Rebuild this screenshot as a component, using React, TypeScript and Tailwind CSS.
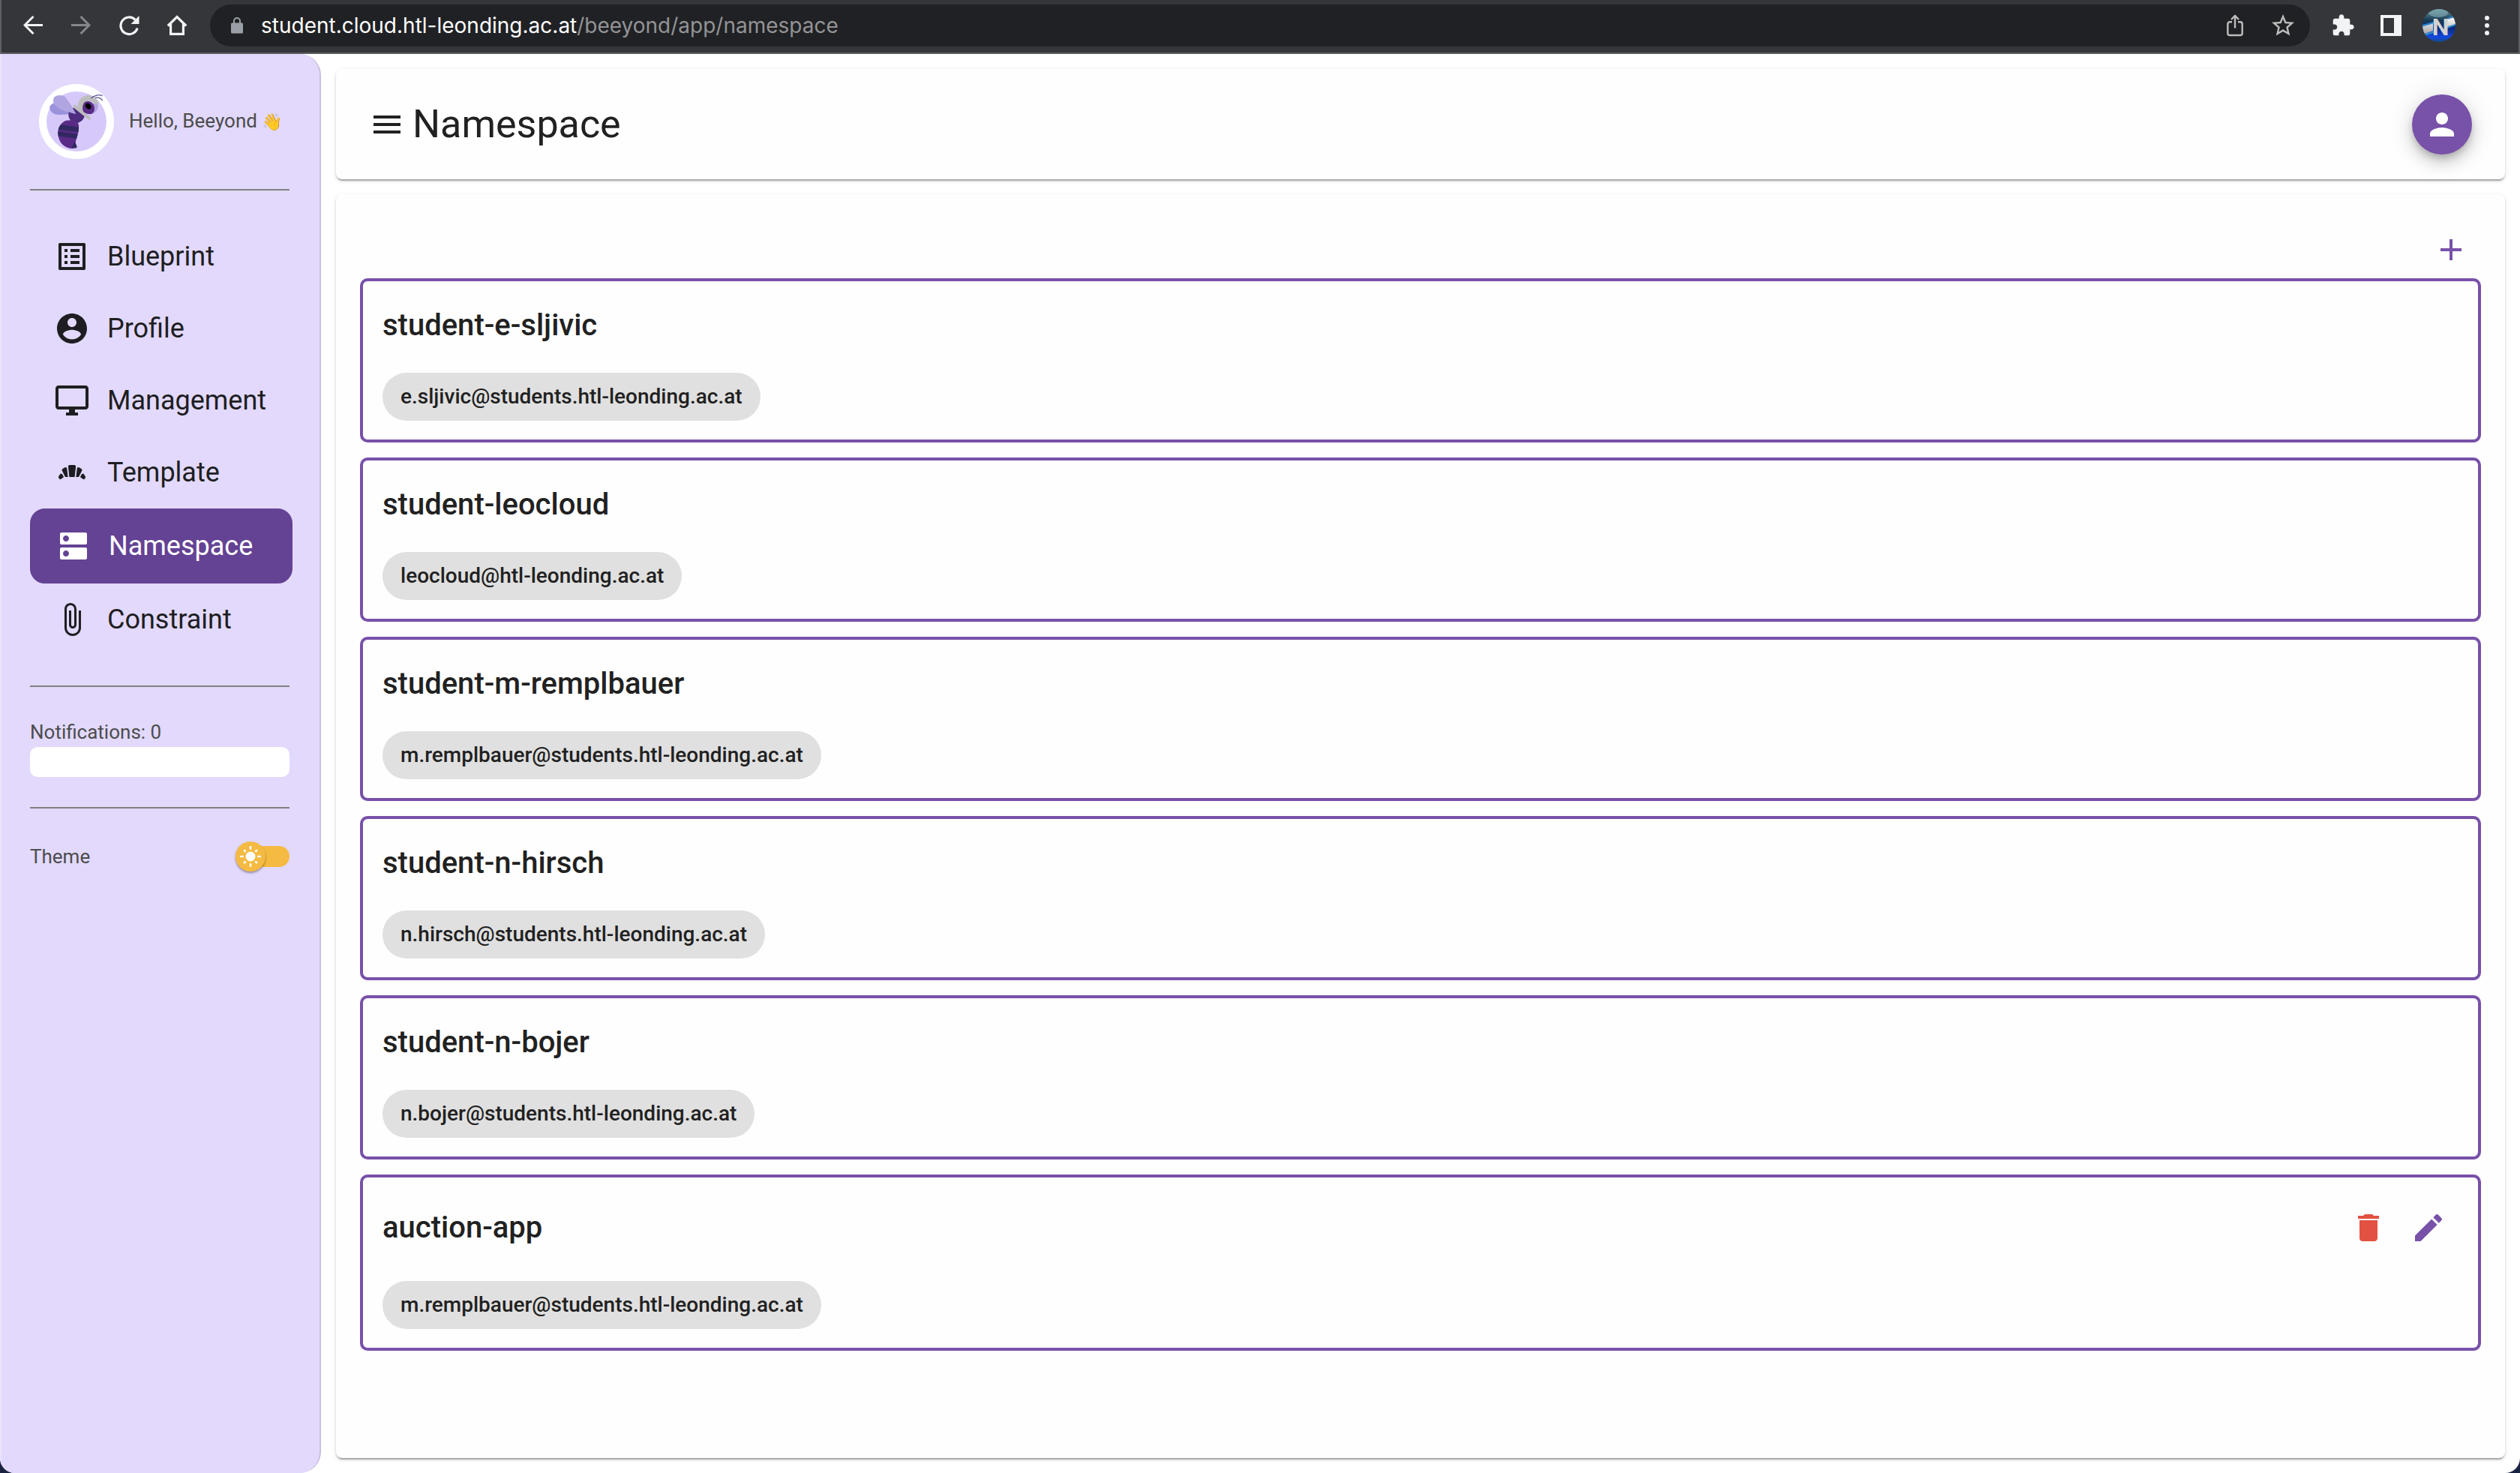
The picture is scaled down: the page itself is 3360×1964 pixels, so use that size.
import React from "react";

type IconProps = { d: string; className?: string };

function Icon({ d, className = "size-12" }: IconProps) {
  return (
    <svg viewBox="0 0 24 24" className={`shrink-0 ${className}`} fill="currentColor" aria-hidden="true">
      <path d={d} />
    </svg>
  );
}

const paths = {
  listAlt:
    "M19 5v14H5V5h14m1.1-2H3.9c-.5 0-.9.4-.9.9v16.2c0 .4.4.9.9.9h16.2c.4 0 .9-.5.9-.9V3.9c0-.5-.5-.9-.9-.9zM11 7h6v2h-6V7zm0 4h6v2h-6v-2zm0 4h6v2h-6zM7 7h2v2H7zm0 4h2v2H7zm0 4h2v2H7z",
  account:
    "M12 2C6.48 2 2 6.48 2 12s4.48 10 10 10 10-4.48 10-10S17.52 2 12 2zm0 3c1.66 0 3 1.34 3 3s-1.34 3-3 3-3-1.34-3-3 1.34-3 3-3zm0 14.2c-2.5 0-4.71-1.28-6-3.22.03-1.99 4-3.08 6-3.08 1.99 0 5.97 1.09 6 3.08-1.29 1.94-3.5 3.22-6 3.22z",
  desktop:
    "M21 2H3c-1.1 0-2 .9-2 2v12c0 1.1.9 2 2 2h7v2H8v2h8v-2h-2v-2h7c1.1 0 2-.9 2-2V4c0-1.1-.9-2-2-2zm0 14H3V4h18v12z",
  croissant:
    "M19.28 16.34C18.07 15.45 17.46 15 17.46 15s.32-.59.96-1.78c.38-.59 1.22-.59 1.6 0l.81 1.26c.19.3.21.68.06 1l-.22.47c-.25.54-.91.72-1.39.39zM4.72 16.34c-.48.33-1.13.15-1.39-.38l-.23-.47c-.15-.32-.13-.7.06-1l.81-1.26c.38-.59 1.22-.59 1.6 0 .65 1.18.97 1.77.97 1.77s-.61.45-1.82 1.34zM15.36 9.37c.09-.68.73-1.06 1.27-.75l1.59.9c.46.26.63.91.36 1.41L16.5 15h-1.8l.66-5.63zM8.63 9.37l.67 5.63H7.5l-2.08-4.07c-.26-.5-.09-1.15.36-1.41l1.59-.9c.54-.31 1.18.07 1.26.75zM13.8 15h-3.6l-.74-6.88c-.04-.59.35-1.12.88-1.12h3.34c.53 0 .92.53.88 1.12L13.8 15z",
  dns: "M20 13H4c-.55 0-1 .45-1 1v6c0 .55.45 1 1 1h16c.55 0 1-.45 1-1v-6c0-.55-.45-1-1-1zM7 19c-1.1 0-2-.9-2-2s.9-2 2-2 2 .9 2 2-.9 2-2 2zM20 3H4c-.55 0-1 .45-1 1v6c0 .55.45 1 1 1h16c.55 0 1-.45 1-1V4c0-.55-.45-1-1-1zM7 9c-1.1 0-2-.9-2-2s.9-2 2-2 2 .9 2 2-.9 2-2 2z",
  clip: "M16.5 6v11.5c0 2.21-1.79 4-4 4s-4-1.79-4-4V5c0-1.38 1.12-2.5 2.5-2.5s2.5 1.12 2.5 2.5v10.5c0 .55-.45 1-1 1s-1-.45-1-1V6H10v9.5c0 1.38 1.12 2.5 2.5 2.5s2.5-1.12 2.5-2.5V5c0-2.21-1.79-4-4-4S7 2.79 7 5v12.5c0 3.04 2.46 5.5 5.5 5.5s5.5-2.46 5.5-5.5V6h-1.5z",
  menu: "M3 18h18v-2H3v2zm0-5h18v-2H3v2zm0-7v2h18V6H3z",
  person:
    "M12 12c2.21 0 4-1.79 4-4s-1.79-4-4-4-4 1.79-4 4 1.79 4 4 4zm0 2c-2.67 0-8 1.34-8 4v2h16v-2c0-2.66-5.33-4-8-4z",
  plus: "M19 13h-6v6h-2v-6H5v-2h6V5h2v6h6v2z",
  trash: "M6 19c0 1.1.9 2 2 2h8c1.1 0 2-.9 2-2V7H6v12zM19 4h-3.5l-1-1h-5l-1 1H5v2h14V4z",
  pencil:
    "M3 17.25V21h3.75L17.81 9.94l-3.75-3.75L3 17.25zM20.71 7.04c.39-.39.39-1.02 0-1.41l-2.34-2.34c-.39-.39-1.02-.39-1.41 0l-1.83 1.83 3.75 3.75 1.83-1.83z",
  puzzle:
    "M20.5 11H19V7c0-1.1-.9-2-2-2h-4V3.5C13 2.12 11.88 1 10.5 1S8 2.12 8 3.5V5H4c-1.1 0-1.99.9-1.99 2v3.8H3.5c1.49 0 2.7 1.21 2.7 2.7s-1.21 2.7-2.7 2.7H2V20c0 1.1.9 2 2 2h3.8v-1.5c0-1.49 1.21-2.7 2.7-2.7 1.49 0 2.7 1.21 2.7 2.7V22H17c1.1 0 2-.9 2-2v-4h1.5c1.38 0 2.5-1.12 2.5-2.5S21.88 11 20.5 11z",
  star: "M22 9.24l-7.19-.62L12 2 9.19 8.63 2 9.24l5.46 4.73L5.82 21 12 17.27 18.18 21l-1.63-7.03L22 9.24zM12 15.4l-3.76 2.27 1-4.28-3.32-2.88 4.38-.38L12 6.1l1.71 4.04 4.38.38-3.32 2.88 1 4.28L12 15.4z",
};

function BarButton({ label, children }: { label: string; children: React.ReactNode }) {
  return (
    <button type="button" aria-label={label} className="flex h-14 w-16 shrink-0 items-center justify-center">
      {children}
    </button>
  );
}

function BrowserBar() {
  return (
    <div className="flex items-center border-x-2 border-b-2 border-[#5f6063] bg-[#35363a] px-[10px] pt-[6px] pb-2 text-[#f1f3f4]">
      <BarButton label="Back">
        <svg viewBox="0 0 26 26" className="size-[26px]" fill="none" stroke="currentColor" strokeWidth="3">
          <path d="M26 12.5H2M13.500 1 2 12.500 13.500 24" />
        </svg>
      </BarButton>
      <BarButton label="Forward">
        <svg viewBox="0 0 26 26" className="size-[26px] text-[#86878a]" fill="none" stroke="currentColor" strokeWidth="3">
          <path d="M0 12.500H24M12.500 1 24 12.500 12.500 24" />
        </svg>
      </BarButton>
      <BarButton label="Reload">
        <svg viewBox="0 0 28 28" className="size-7">
          <path d="M25.100 17.500A11.300 11.300 0 1 1 22.300 6.300" fill="none" stroke="currentColor" strokeWidth="3.200" />
          <path d="M27.500 1v11h-11z" fill="currentColor" />
        </svg>
      </BarButton>
      <BarButton label="Home">
        <svg viewBox="0 0 28 28" className="size-7" fill="none" stroke="currentColor" strokeWidth="3.200">
          <path d="M1.800 14.500 14 2.600l12.200 11.900M5.600 12v13.400h16.800V12" />
        </svg>
      </BarButton>
      <div className="mx-3 flex min-w-0 flex-1 items-center rounded-full bg-[#202124] pr-1 pl-7">
        <svg viewBox="0 0 16 22" className="h-[22px] w-4 shrink-0" aria-hidden="true">
          <path d="M4 9V5a4 4 0 0 1 8 0v4" fill="none" stroke="#9aa0a6" strokeWidth="2" />
          <rect y="7.500" width="16" height="14" rx="1.500" fill="#9aa0a6" />
        </svg>
        <div className="ml-6 min-w-0 flex-1 truncate font-['Inter',sans-serif] text-[28px] leading-9 text-[#939496]">
          <span className="text-white">student.cloud.htl-leonding.ac.at</span>/beeyond/app/namespace
        </div>
        <BarButton label="Share">
          <svg viewBox="0 0 24 30" className="h-[30px] w-6 text-[#bdbdbd]" fill="none" stroke="currentColor" strokeWidth="2.400">
            <path d="M8 10.200H5A2.700 2.700 0 0 0 2.300 12.900v12.400A2.700 2.700 0 0 0 5 28h14a2.700 2.700 0 0 0 2.700-2.700V12.900a2.700 2.700 0 0 0-2.700-2.700h-3M12 18.500V2.500M7 7l5-5 5 5" />
          </svg>
        </BarButton>
        <BarButton label="Bookmark">
          <Icon d={paths.star} className="size-9 text-[#bdbdbd]" />
        </BarButton>
      </div>
      <BarButton label="Extensions">
        <Icon d={paths.puzzle} className="size-8" />
      </BarButton>
      <BarButton label="Side panel">
        <svg viewBox="0 0 28 28" className="size-7" fill="currentColor">
          <path fillRule="evenodd" d="M0 0h28v28H0zM4 4v20h14V4z" />
        </svg>
      </BarButton>
      <BarButton label="Account">
        <svg viewBox="0 0 44 44" className="size-11">
          <defs>
            <clipPath id="accountClip">
              <circle cx="22" cy="22" r="22" />
            </clipPath>
            <linearGradient id="accountSea" x1="0" y1="0" x2="0" y2="1">
              <stop offset="0" stopColor="#5f8f9b" />
              <stop offset=".35" stopColor="#163a52" />
              <stop offset=".6" stopColor="#0a2a86" />
              <stop offset=".85" stopColor="#1347e0" />
              <stop offset="1" stopColor="#124a80" />
            </linearGradient>
            <linearGradient id="accountSteel" x1="0" y1="0" x2="0" y2="1">
              <stop offset="0" stopColor="#ffffff" />
              <stop offset="1" stopColor="#a3a3a3" />
            </linearGradient>
          </defs>
          <g clipPath="url(#accountClip)">
            <rect width="44" height="44" fill="url(#accountSea)" />
            <ellipse cx="21" cy="5" rx="13" ry="6" fill="#8fb6bc" opacity=".55" />
            <path d="M0 21 15 17v3L0 24zM0 34l15-5v3L0 37zM33 12l11-4v2l-11 4zM33 23l11-4v3l-11 4z" fill="#2f86cf" />
            <path d="M0 23.500 14 19.500v9.500L0 34z M33 14 44 10.500v9.500l-11 3.500z" fill="url(#accountSteel)" />
            <text x="24" y="35" textAnchor="middle" fontSize="32" fontWeight="700" fontFamily="Roboto, sans-serif" fill="#d2d2d2">
              N
            </text>
          </g>
        </svg>
      </BarButton>
      <BarButton label="More">
        <svg viewBox="0 0 6 26" className="h-[26px] w-[6px]" fill="currentColor">
          <circle cx="3" cy="3" r="3" />
          <circle cx="3" cy="13" r="3" />
          <circle cx="3" cy="23" r="3" />
        </svg>
      </BarButton>
    </div>
  );
}

function BeeLogo() {
  return (
    <svg viewBox="0 0 300 300" className="size-[100px] shrink-0" role="img" aria-label="Beeyond">
      <defs>
        <clipPath id="abdomen">
          <path d="M108 146C88 154 74 174 76 200c2 32 24 56 56 58l18-2c-6-20-4-26 2-44 5-16 8-30 7-48-2-10-10-14-20-20z" />
        </clipPath>
      </defs>
      <circle cx="150" cy="150" r="150" fill="#fff" />
      <circle cx="150" cy="150" r="120" fill="#d6c9fa" />
      <path d="M62 78C46 78 40 92 44 101c6 16 22 22 40 22l38-2 24-4-30-28z" fill="#9b92dc" />
      <path d="M60 54c8-11 34-12 46-1 14 18 26 40 44 62l2 12-36-14C84 104 46 82 60 54z" fill="#b0a4e1" />
      <path d="M119 112c10 4 18 6 29 8l-13-24 10-2 37 34c-2 14-18 28-34 28-20-2-34-18-29-44z" fill="#4e2c7e" />
      <g clipPath="url(#abdomen)">
        <rect x="70" y="140" width="95" height="125" fill="#592b86" />
        <path d="M80 162l82 11-3 19-84-10zM72 189l88 13-6 18-80-13z" fill="#31285f" />
      </g>
      <path d="M144 230c2 10 8 14 8 24l-22 3c2-8 8-16 14-27z" fill="#31285f" />
      <path d="M236 74c4 26-8 44-32 48l-6-40z" fill="#b0a4e1" />
      <path d="M155 92c0-30 20-50 46-47 18 2 30 12 36 28l-6 10-30-18-24 20-2 34z" fill="#bdbdbd" />
      <path d="M143 90l58 47" stroke="#bdbdbd" strokeWidth="13" strokeLinecap="round" />
      <path d="M180 76c10-12 32-8 40 10 5 16 0 28-10 33-14 4-30-2-35-14-2-10 0-22 5-29z" fill="#592b86" />
      <ellipse cx="197" cy="89" rx="10" ry="13" fill="#000" transform="rotate(-45 197 89)" />
      <path d="M208 57c12-10 32-18 46-9M225 55c14-2 24 2 29 12" fill="none" stroke="#5d5392" strokeWidth="3.500" />
    </svg>
  );
}

const nav = [
  { label: "Blueprint", d: paths.listAlt },
  { label: "Profile", d: paths.account },
  { label: "Management", d: paths.desktop },
  { label: "Template", d: paths.croissant },
  { label: "Namespace", d: paths.dns, active: true },
  { label: "Constraint", d: paths.clip },
];

function ThemeToggle() {
  return (
    <label className="relative flex h-10 w-[72px] cursor-pointer items-center justify-end">
      <input type="checkbox" role="switch" aria-labelledby="theme-label" className="peer sr-only" />
      <span className="h-7 w-[68px] rounded-full bg-[#f5ba42]" />
      <svg
        viewBox="0 0 40 40"
        className="absolute left-0 size-10 rounded-full bg-[#f5ba42] shadow-[0_2px_3px_rgba(0,0,0,0.35)]"
        fill="#fff"
        aria-hidden="true"
      >
        <circle cx="20" cy="20" r="6.500" />
        {[0, 90, 180, 270].map((a) => (
          <rect key={a} x="18.700" y="6" width="2.600" height="5" rx="1.300" transform={`rotate(${a} 20 20)`} />
        ))}
        {[45, 135, 225, 315].map((a) => (
          <rect key={a} x="18.500" y="7.200" width="3" height="4" rx="1.500" transform={`rotate(${a} 20 20)`} />
        ))}
      </svg>
    </label>
  );
}

function Sidebar() {
  return (
    <aside className="w-[428px] shrink-0 rounded-r-[28px] border-r-2 border-l-2 border-r-[#c8bfe0] border-l-[#e9e2fc] bg-[#e2d9fc] py-10 pr-10 pl-[38px] text-[26px] leading-10 text-[#4c4c4c]">
      <div className="flex items-center gap-5 pl-3">
        <BeeLogo />
        <p className="whitespace-nowrap">
          Hello, Beeyond <span className="text-[22px]">👋</span>
        </p>
      </div>
      <hr className="my-10 border-t-2 border-[#808080]" />
      <nav className="-mr-1 text-4xl leading-[96px] text-[#1e1e22]">
        {nav.map((item) => (
          <a
            key={item.label}
            href={`#${item.label.toLowerCase()}`}
            aria-current={item.active ? "page" : undefined}
            className={
              item.active
                ? "flex items-center gap-[23px] rounded-[20px] border-2 border-[#644294] bg-[#644294] pl-8 text-white"
                : "flex items-center gap-[23px] pl-8"
            }
          >
            <Icon d={item.d} />
            {item.label}
          </a>
        ))}
      </nav>
      <hr className="my-10 border-t-2 border-[#808080]" />
      <section>
        <h2>Notifications: 0</h2>
        <div className="h-10 rounded-[10px] bg-white" />
      </section>
      <hr className="my-10 border-t-2 border-[#808080]" />
      <div className="flex h-12 items-center justify-between">
        <span id="theme-label">Theme</span>
        <ThemeToggle />
      </div>
    </aside>
  );
}

const namespaces = [
  { name: "student-e-sljivic", mail: "e.sljivic@students.htl-leonding.ac.at" },
  { name: "student-leocloud", mail: "leocloud@htl-leonding.ac.at" },
  { name: "student-m-remplbauer", mail: "m.remplbauer@students.htl-leonding.ac.at" },
  { name: "student-n-hirsch", mail: "n.hirsch@students.htl-leonding.ac.at" },
  { name: "student-n-bojer", mail: "n.bojer@students.htl-leonding.ac.at" },
  { name: "auction-app", mail: "m.remplbauer@students.htl-leonding.ac.at", editable: true },
];

export default function App() {
  return (
    <div className="min-h-screen bg-[#1a2342] font-['Roboto',sans-serif] text-[#212121]">
      <div className="flex min-h-screen flex-col overflow-hidden rounded-b-[20px] bg-white">
        <BrowserBar />
        <div className="flex flex-1">
          <Sidebar />
          <main className="flex min-w-0 flex-1 flex-col gap-5 p-5">
            <header className="flex items-center justify-between rounded-lg bg-[#fefefe] px-11 pt-[34px] pb-[33px] shadow-[0_4px_2px_-2px_rgba(0,0,0,0.2),0_2px_2px_0_rgba(0,0,0,0.14),0_2px_6px_0_rgba(0,0,0,0.12)]">
              <div className="flex items-center gap-[10px]">
                <button type="button" aria-label="Toggle menu">
                  <Icon d={paths.menu} />
                </button>
                <h1 className="text-[52px] leading-16">Namespace</h1>
              </div>
              <button
                type="button"
                aria-label="User menu"
                className="flex size-20 items-center justify-center rounded-full bg-[#7851a9] text-white shadow-[0_6px_10px_-2px_rgba(0,0,0,0.2),0_12px_20px_0_rgba(0,0,0,0.14),0_2px_36px_0_rgba(0,0,0,0.12)]"
              >
                <Icon d={paths.person} />
              </button>
            </header>
            <section className="flex-1 rounded-lg bg-[#fefefe] px-8 pt-9 pb-8 shadow-[0_4px_2px_-2px_rgba(0,0,0,0.2),0_2px_2px_0_rgba(0,0,0,0.14),0_2px_6px_0_rgba(0,0,0,0.12)]">
              <div className="flex justify-end">
                <button type="button" aria-label="Add namespace" className="flex h-[76px] w-20 items-center justify-center text-[#7851a9]">
                  <Icon d={paths.plus} />
                </button>
              </div>
              <ul className="flex flex-col gap-5">
                {namespaces.map((ns) => (
                  <li key={ns.name} className="rounded-[10px] border-4 border-[#7851a9] px-[26px] pt-[27px] pb-[25px]">
                    <div className="flex items-center justify-between">
                      <h2 className="text-[40px] leading-16 font-medium">{ns.name}</h2>
                      {ns.editable && (
                        <div className="flex">
                          <button type="button" aria-label={`Delete ${ns.name}`} className="flex size-20 items-center justify-center text-[#e25141]">
                            <Icon d={paths.trash} />
                          </button>
                          <button type="button" aria-label={`Edit ${ns.name}`} className="flex size-20 items-center justify-center text-[#7851a9]">
                            <Icon d={paths.pencil} />
                          </button>
                        </div>
                      )}
                    </div>
                    <div className="mt-[31px] flex">
                      <span className="rounded-full bg-[#e0e0e0] px-6 text-[28px] leading-16 font-medium">{ns.mail}</span>
                    </div>
                  </li>
                ))}
              </ul>
            </section>
          </main>
        </div>
      </div>
    </div>
  );
}
